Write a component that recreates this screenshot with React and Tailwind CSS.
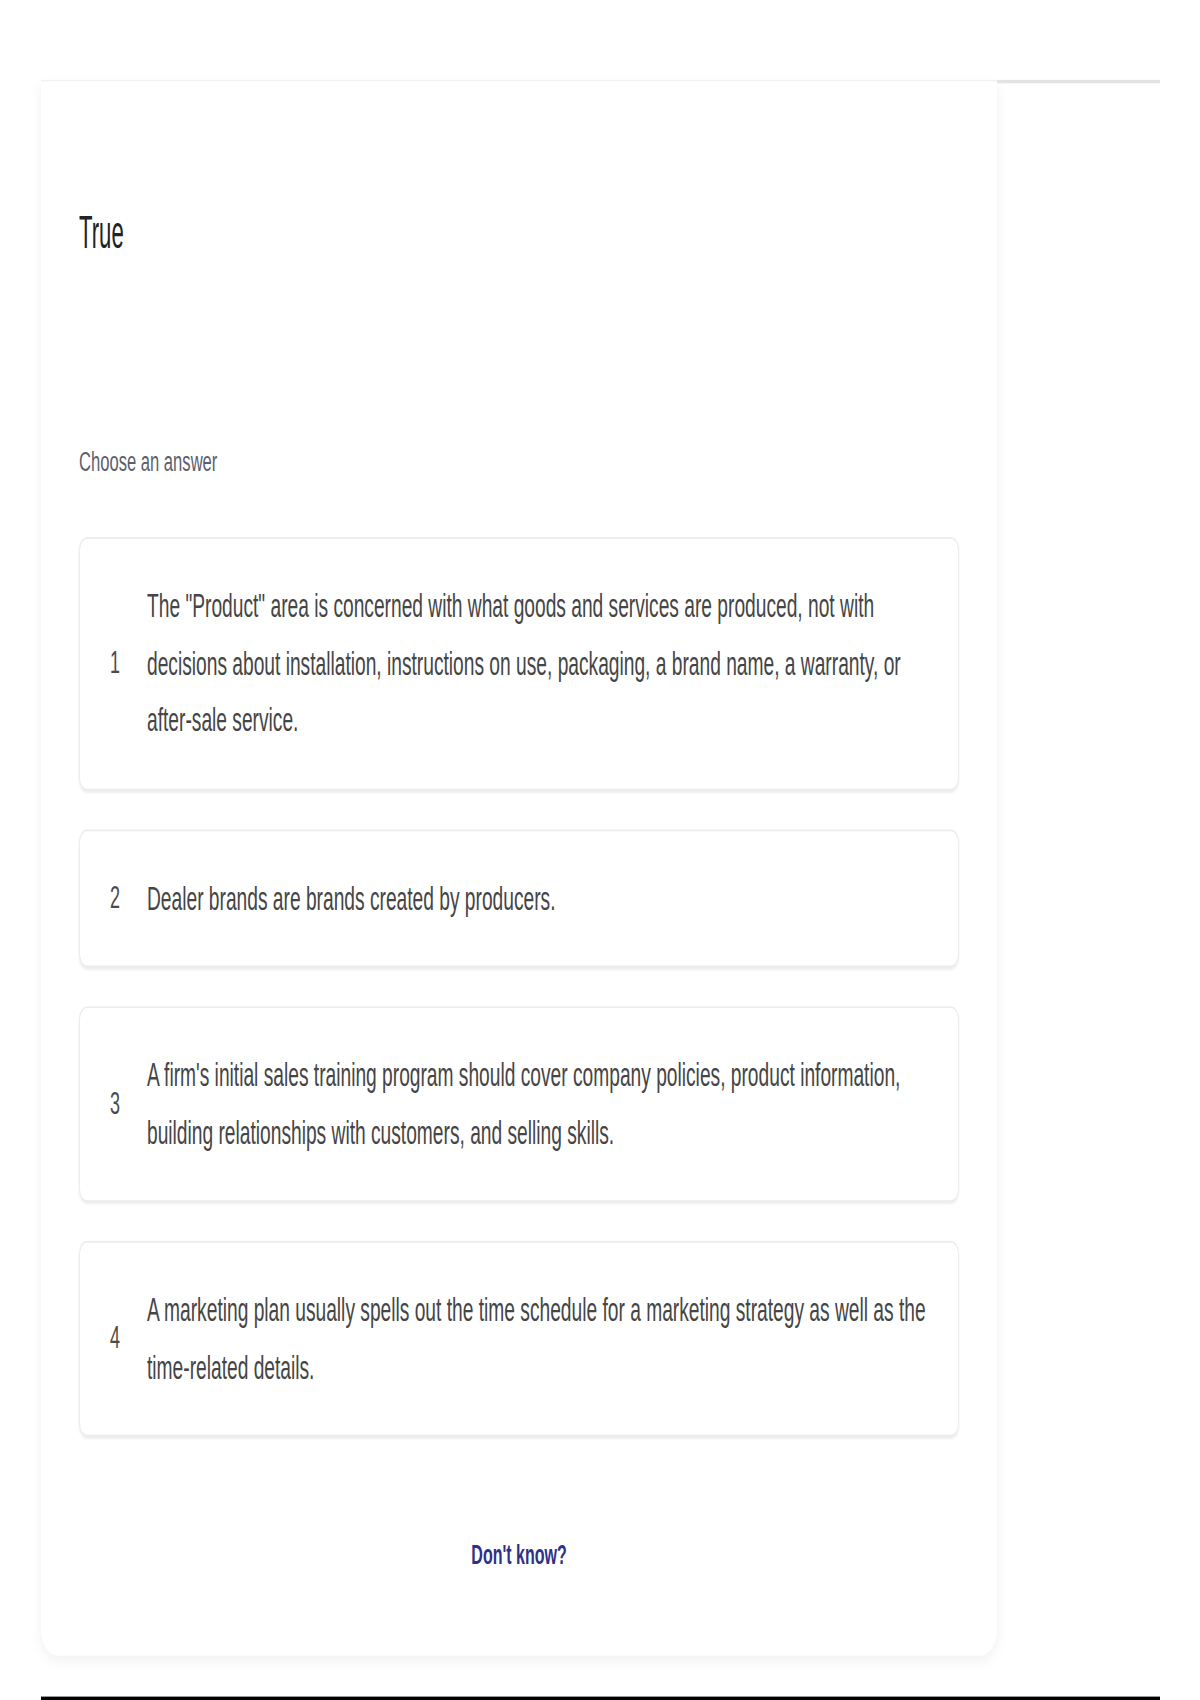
const options = [
  {
    n: 1,
    lines: [
      'The "Product" area is concerned with what goods and services are produced, not with',
      'decisions about installation, instructions on use, packaging, a brand name, a warranty, or',
      'after-sale service.',
    ],
  },
  { n: 2, lines: ['Dealer brands are brands created by producers.'] },
  {
    n: 3,
    lines: [
      "A firm's initial sales training program should cover company policies, product information,",
      'building relationships with customers, and selling skills.',
    ],
  },
  {
    n: 4,
    lines: [
      'A marketing plan usually spells out the time schedule for a marketing strategy as well as the',
      'time-related details.',
    ],
  },
]

function AnswerOption({ n, lines }) {
  return (
    <button
      type="button"
      className="flex items-center w-full text-left bg-white border border-[#ececec] rounded-[8px] shadow-[0_1px_2px_rgba(0,0,0,0.07)] py-[23px] pl-[29px] pr-[20px]"
    >
      <span className="w-[12px] shrink-0 text-center text-[18px] leading-[33.5px] text-[#4a4a4a]">{n}</span>
      <p className="ml-[26px] text-[19.2px] leading-[33.5px] text-[#454545] whitespace-nowrap">
        {lines.map((l, i) => (
          <span key={i} className="block">{l}</span>
        ))}
      </p>
    </button>
  )
}

export default function App() {
  return (
    <div className="h-[1700px] overflow-hidden bg-white">
      {/* the whole page is stretched vertically like the reference capture */}
      <div className="h-[1000px] origin-top scale-y-[1.7] pl-[41px] pr-[40px] pt-[47px] flex flex-col font-['Liberation_Sans',Arial,sans-serif]">
        <div className="flex">
          {/* Question card */}
          <main className="w-[956px] h-[927px] flex flex-col bg-white border-t border-[#f1f1f1] rounded-b-[16px] shadow-[0_3px_10px_rgba(0,0,0,0.06)] px-[38px] pt-[74px] pb-[47px]">
            <h1 className="h-[30px] leading-[30px] text-[27px] text-[#222]">
              <span className="inline-block origin-left scale-x-[0.82]">True</span>
            </h1>

            <p className="mt-[108px] h-[24px] leading-[24px] text-[16.6px] text-[#5c5f6a]">Choose an answer</p>

            <div className="mt-[32px] flex flex-col gap-[23px]">
              {options.map((o) => (
                <AnswerOption key={o.n} {...o} />
              ))}
            </div>

            <div className="mt-auto flex justify-center">
              <button type="button" className="h-[24px] leading-[24px] text-[16px] font-bold text-[#2f3185]">
                Don't know?
              </button>
            </div>
          </main>

          {/* Side panel */}
          <aside className="flex-1 border-t-2 border-[#e3e3e3]" />
        </div>

        <div className="mt-auto h-[2px] bg-black" />
      </div>
    </div>
  )
}
